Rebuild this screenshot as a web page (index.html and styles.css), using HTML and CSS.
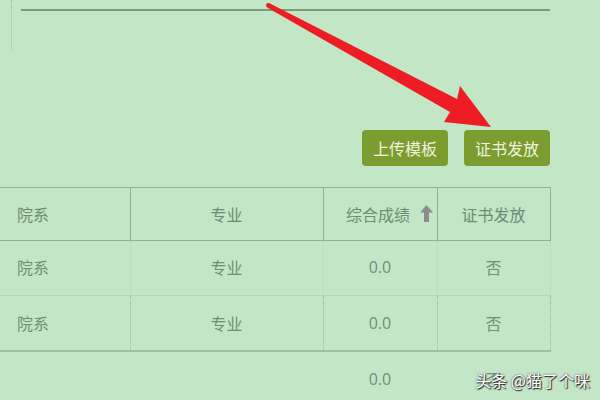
FILE: index.html
```html
<!DOCTYPE html>
<html lang="zh-CN">
<head>
  <meta charset="UTF-8" />
  <title>证书发放</title>
  <link rel="stylesheet" href="styles.css">
</head>
<body>

<div class="page">

  <div class="panel">
    <div class="rule"></div>
  </div>

  <div class="toolbar">
    <button class="botao">上传模板</button>
    <button class="botao">证书发放</button>
  </div>

  <table class="lista">
    <colgroup>
      <col class="c-dept">
      <col class="c-major">
      <col class="c-score">
      <col class="c-cert">
    </colgroup>
    <thead>
      <tr>
        <th class="esq">院系</th>
        <th>专业</th>
        <th class="ordena">综合成绩
          <svg class="seta-ordem" viewBox="0 0 13 17" width="13" height="17">
            <path d="M6.5 0 L13 7.5 H9 V17 H4 V7.5 H0 Z" />
          </svg>
        </th>
        <th>证书发放</th>
      </tr>
    </thead>
    <tbody>
      <tr class="linha-1">
        <td class="esq">院系</td>
        <td>专业</td>
        <td class="num">0.0</td>
        <td>否</td>
      </tr>
      <tr class="linha-2">
        <td class="esq">院系</td>
        <td>专业</td>
        <td class="num">0.0</td>
        <td>否</td>
      </tr>
      <tr class="linha-3">
        <td class="esq"></td>
        <td></td>
        <td class="num">0.0</td>
        <td>否</td>
      </tr>
    </tbody>
  </table>

  <!-- seta vermelha por cima -->
  <svg class="anotacao" viewBox="0 0 600 400" width="600" height="400">
    <path d="M266 5 Q266 3 269 3 L457 99 L460 86 L491 127 L444 122 L450 112 L268 8 Q266 7 266 5 Z" fill="#ee1c24" />
  </svg>

  <div class="marca">头条 @猫了个咪</div>

</div>

</body>
</html>
```

FILE: styles.css
```css
*, *::before, *::after { box-sizing: border-box; margin: 0; padding: 0; }

:root {
  --bg:       #c3e6c6;
  --text:     #718f74;
  --line:     #8fb392;
  --line-soft:#b3d7b5;
  --btn:      #7b9c2f;
  --btn-text: #eef3df;
  --cjk: "Noto Sans CJK SC", "Noto Sans", sans-serif;
}

body {
  background: var(--bg);
  font-family: var(--cjk);
  color: var(--text);
  overflow: hidden;
}

.page {
  position: relative;
  width: 600px;
  height: 400px;
  overflow: hidden;
}

/* ── topo ─────────────────────────────── */
.panel {
  margin-left: 11px;
  width: 539px;
  height: 50px;
  padding-top: 9px;
  border-left: 1px dotted #9dbfa0;
}

.rule {
  margin-left: 9px;
  border-top: 2px solid #7a9c7d;
}

.toolbar {
  width: 550px;
  margin-top: 80px;
  display: flex;
  justify-content: flex-end;
  gap: 16px;
}

.botao {
  width: 86px;
  height: 36px;
  border: none;
  border-radius: 4px;
  background: var(--btn);
  color: var(--btn-text);
  font-family: var(--cjk);
  font-size: 16px;
}

/* ── tabela ───────────────────────────── */
.lista {
  margin-top: 21px;
  width: 550px;
  border-collapse: collapse;
  table-layout: fixed;
}

.c-dept  { width: 130px; }
.c-major { width: 193px; }
.c-score { width: 114px; }
.c-cert  { width: 113px; }

.lista th {
  position: relative;
  height: 53px;
  font-weight: 400;
  font-size: 16px;
  text-align: center;
  color: #6e8c71;
  border: 1px solid var(--line);
}

.lista th.esq { border-left: none; }

.lista .esq {
  text-align: left;
  padding-left: 17px;
}

.ordena { padding-right: 4px; }

.seta-ordem {
  position: absolute;
  right: 4px;
  top: 17px;
  fill: #8c8c8c;
}

.lista td {
  height: 55px;
  font-size: 16px;
  text-align: center;
  color: var(--text);
}

.lista td.num { font-family: "Open Sans", sans-serif; }

.linha-1 td {
  border-bottom: 1px solid var(--line-soft);
  border-right: 1px dotted var(--line-soft);
  vertical-align: middle;
  padding-bottom: 3px;
}

.linha-2 td {
  border-right: 1px dotted #98b89b;
  border-bottom: 2px solid #9fc1a2;
}

.linha-3 td { height: 56px; }

/* ── sobreposições ────────────────────── */
.anotacao {
  position: absolute;
  left: 0;
  top: 0;
  pointer-events: none;
}

.marca {
  position: absolute;
  right: 10px;
  top: 368px;
  font-size: 16px;
  color: #ffffff;
  text-shadow: 0 0 2px #333, 1px 1px 1px #222;
}
```
